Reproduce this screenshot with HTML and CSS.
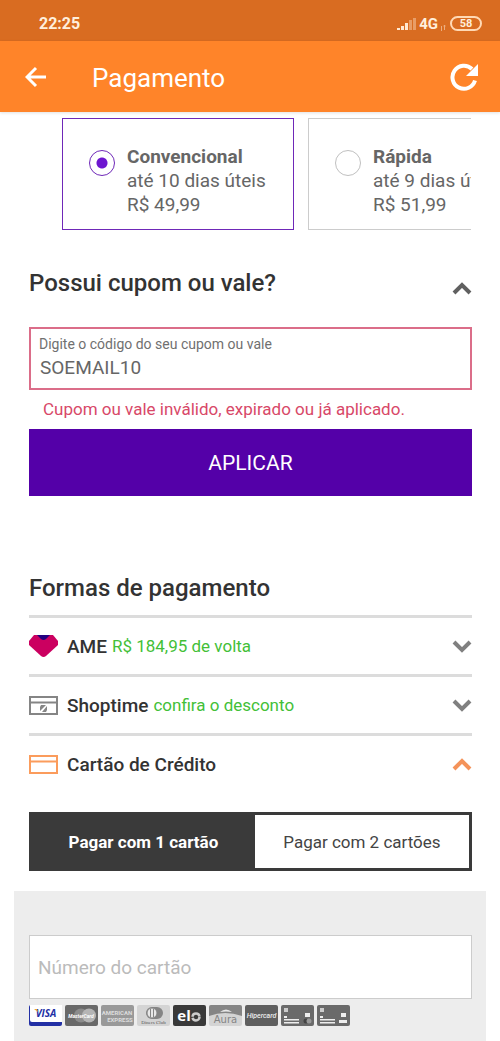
FILE: index.html
```html
<!DOCTYPE html>
<html lang="pt-BR">
<head>
<meta charset="utf-8">
<meta name="viewport" content="width=device-width, initial-scale=1">
<title>Pagamento</title>
<link rel="stylesheet" href="styles.css">
</head>
<body>
<div class="status">
  <span class="clock">22:25</span>
  <div class="status-right">
    <svg class="signal" width="20" height="14" viewBox="0 0 20 14" aria-hidden="true">
      <path d="M0 11h3v2H0zM4 9h3v4H4zM8 6h3v7H8z"/>
      <path opacity=".4" d="M12 3h3v10h-3zM16 1h3v12h-3z"/>
    </svg>
    <span class="network">4G</span>
    <svg class="traffic" width="6" height="6" viewBox="0 0 6 6" aria-hidden="true"><path d="M1.500 1v5M4.500 0v5M3.500 1h2"/></svg>
    <span class="battery">58</span>
  </div>
</div>
<header class="topbar">
  <button class="icon-button" aria-label="Voltar">
    <svg width="22" height="22" viewBox="0 0 22 22"><path class="line" d="M21 11H3M11 2l-9 9 9 9"/></svg>
  </button>
  <h1>Pagamento</h1>
  <button class="icon-button" aria-label="Atualizar">
    <svg width="30" height="30" viewBox="0 0 30 30"><path class="line thick" d="M26 18.500A11.500 11.500 0 1 1 23 7"/><path fill="#fff" d="M29 2v12H17z"/></svg>
  </button>
</header>
<main>
  <section class="shipping" aria-label="Entrega">
    <label class="option selected">
      <input type="radio" name="shipping" checked>
      <span class="option-text"><strong>Convencional</strong><span>até 10 dias úteis</span><span>R$ 49,99</span></span>
    </label>
    <label class="option">
      <input type="radio" name="shipping">
      <span class="option-text"><strong>Rápida</strong><span>até 9 dias úteis</span><span>R$ 51,99</span></span>
    </label>
  </section>

  <section class="coupon">
    <div class="coupon-head">
      <h2>Possui cupom ou vale?</h2>
      <button class="toggle" aria-label="Recolher cupom">
        <svg class="chevron dark" width="20" height="14" viewBox="0 0 20 14"><path d="M2 12l8-8 8 8"/></svg>
      </button>
    </div>
    <div class="field invalid">
      <label for="coupon">Digite o código do seu cupom ou vale</label>
      <input id="coupon" type="text" value="SOEMAIL10">
    </div>
    <p class="error">Cupom ou vale inválido, expirado ou já aplicado.</p>
    <button class="apply">APLICAR</button>
  </section>

  <section class="payment">
    <h2>Formas de pagamento</h2>
    <button class="method">
      <svg width="29" height="22" viewBox="0 0 29 22" aria-hidden="true"><path fill="#cb0060" d="M5 0h19l5 6v4L17 21q-2.500 2-5 0L0 10V6z"/><path fill="#230080" d="M8 0h13l-4 4q-2.500 2-5 0z"/></svg>
      <span class="name">AME</span><span class="promo">R$ 184,95 de volta</span>
      <svg class="chevron" width="20" height="14" viewBox="0 0 20 14" aria-hidden="true"><path d="M2 3l8 8 8-8"/></svg>
    </button>
    <button class="method">
      <svg width="29" height="19" viewBox="0 0 29 19" aria-hidden="true"><path fill="none" stroke="#858585" stroke-width="2" d="M1 1h27v17H1zM1 6.500h27"/><path fill="#858585" d="M11 15v-4l1-2h5zM13 16l5-6v4l-1 2z"/></svg>
      <span class="name">Shoptime</span><span class="promo">confira o desconto</span>
      <svg class="chevron" width="20" height="14" viewBox="0 0 20 14" aria-hidden="true"><path d="M2 3l8 8 8-8"/></svg>
    </button>
    <button class="method" aria-expanded="true">
      <svg width="29" height="19" viewBox="0 0 29 19" aria-hidden="true"><path fill="none" stroke="#fb9c5c" stroke-width="2" d="M1 1h27v17H1zM1 6.500h27"/></svg>
      <span class="name">Cartão de Crédito</span>
      <svg class="chevron orange" width="20" height="14" viewBox="0 0 20 14" aria-hidden="true"><path d="M2 12l8-8 8 8"/></svg>
    </button>
    <div class="tabs">
      <button class="tab active">Pagar com 1 cartão</button>
      <button class="tab">Pagar com 2 cartões</button>
    </div>
  </section>

  <section class="card-form">
    <input class="card-number" type="text" inputmode="numeric" aria-label="Número do cartão" placeholder="Número do cartão">
    <div class="brands">
      <svg viewBox="0 0 33 21"><rect width="33" height="21" rx="2" fill="#2330a5"/><path fill="#fff" d="M1 0h32v17H3q-2 0-2-2z"/><text class="visa" x="17" y="12">VISA</text><path fill="#f0a830" d="M5 4h3l1 3z"/></svg>
      <svg viewBox="0 0 33 21"><rect width="33" height="21" rx="2" fill="#696969"/><circle cx="16" cy="10.500" r="7" fill="#8c8c8c"/><circle cx="24" cy="10.500" r="7" fill="#b5b5b5"/><text class="master" x="16" y="13">MasterCard</text></svg>
      <svg viewBox="0 0 33 21"><rect width="33" height="21" rx="2" fill="#999"/><text class="amex" x="16" y="10">AMERICAN</text><text class="amex" x="19" y="17">EXPRESS</text></svg>
      <svg viewBox="0 0 33 21"><rect width="33" height="21" rx="2" fill="#d4d4d4"/><rect x="9" y="2" width="17" height="12" rx="6" fill="#858585"/><circle cx="15" cy="8" r="5" fill="#e8e8e8" stroke="#858585"/><path stroke="#858585" d="M13.500 4v8M16.500 4v8"/><text class="diners" x="16.500" y="19">Diners Club</text></svg>
      <svg viewBox="0 0 33 21"><rect width="33" height="21" rx="2" fill="#393939"/><text class="elo" x="11" y="16">el</text><circle cx="23" cy="12" r="3.500" fill="none" stroke="#ccc" stroke-width="2.500" stroke-dasharray="10 1"/></svg>
      <svg viewBox="0 0 33 21"><rect width="33" height="21" rx="2" fill="#d4d4d4"/><path fill="#858585" d="M2 0h29q2 0 2 2v9Q16 5 0 11V2q0-2 2-2z"/><path fill="#e8e8e8" d="M11 7q6-5 12 0-6-1-12 0z"/><text class="aura" x="16.500" y="18">Aura</text></svg>
      <svg viewBox="0 0 33 21"><rect width="33" height="21" rx="2" fill="#5f5f5f"/><text class="hiper" x="16.500" y="13">Hipercard</text></svg>
      <svg viewBox="0 0 33 21"><rect width="33" height="21" rx="2" fill="#6a6a6a"/><path fill="#ccc" d="M3 3h4v4H3z"/><path fill="#eee" d="M3 11h3v2H3zM3 14h15v1.500H3zM3 17h15v1.500H3zM24 8h5v4h-5z"/><circle cx="25" cy="16" r="2.500" fill="#444"/><circle cx="28" cy="16" r="2.500" fill="#999"/></svg>
      <svg viewBox="0 0 33 21"><rect width="33" height="21" rx="2" fill="#6a6a6a"/><path fill="#ccc" d="M3 3h4v4H3z"/><path fill="#eee" d="M3 11h3v2H3zM3 14h15v1.500H3zM3 17h15v1.500H3zM24 8h5v4h-5zM22 15h8v3h-8z"/></svg>
    </div>
  </section>
</main>
</body>
</html>
```
FILE: styles.css
```css
* { box-sizing: border-box; }
body {
  margin: 0;
  min-height: 100vh;
  display: flex;
  flex-direction: column;
  background: #fff;
  color: #333;
  font-family: Roboto, "Liberation Sans", sans-serif;
}
button, input { font-family: inherit; }
button { border: 0; padding: 0; background: none; color: inherit; cursor: pointer; }
h1, h2, p { margin: 0; }
svg { flex: none; display: block; }

.status {
  display: flex;
  align-items: center;
  justify-content: space-between;
  height: 41px;
  padding: 6px 18px 0 39px;
  background: #d96c21;
  color: #ffefdc;
  font-size: 16px;
  font-weight: 700;
}
.status-right { display: flex; align-items: center; gap: 2px; }
.signal { fill: #ffe9d2; }
.network { font-size: 15px; }
.traffic { align-self: flex-end; margin-bottom: 2px; fill: none; stroke: #ecae80; }
.battery {
  width: 32px;
  margin-left: 2px;
  border: 2px solid #ffd9b5;
  border-radius: 8px;
  font-size: 11px;
  line-height: 11px;
  text-align: center;
}

.topbar {
  display: flex;
  align-items: center;
  height: 71px;
  padding: 0 21px 0 25px;
  background: #ff8429;
  color: #fff;
  box-shadow: 0 1px 3px rgba(0, 0, 0, .12);
}
.topbar h1 { flex: 1; margin-left: 45px; padding-top: 2px; font-size: 26px; font-weight: 400; }
.line { fill: none; stroke: #fff; stroke-width: 3; }
.thick { stroke-width: 4; }

main { flex: 1; display: flex; flex-direction: column; }

.shipping {
  display: flex;
  gap: 14px;
  margin: 6px 29px 0 62px;
  overflow: hidden;
}
.option {
  flex: none;
  display: flex;
  gap: 12px;
  width: 232px;
  height: 112px;
  padding: 26px;
  border: 1px solid #ccc;
  color: #666;
  font-size: 19px;
  line-height: 24px;
}
.option.selected { border-color: #6f28b8; }
.option-text { display: flex; flex-direction: column; white-space: nowrap; }
.option strong { font-weight: 700; }
.option input {
  appearance: none;
  flex: none;
  width: 26px;
  height: 26px;
  margin: 5px 0 0;
  border: 1px solid #c0c0c0;
  border-radius: 50%;
}
.option input:checked {
  border-color: #6f28b8;
  background: radial-gradient(circle, #6d16d0 5px, transparent 6px);
}

.coupon { margin: 36px 28px 0 29px; }
.coupon-head { display: flex; justify-content: space-between; align-items: center; height: 34px; }
h2 { font-size: 24px; line-height: 34px; font-weight: 500; }
.toggle { padding-top: 10px; }
.chevron { fill: none; stroke: #808080; stroke-width: 4; }
.chevron.dark { stroke: #606060; }
.chevron.orange { stroke: #f4935a; }

.field {
  display: flex;
  flex-direction: column;
  margin-top: 27px;
  height: 63px;
  padding: 6px 8px;
  border: 2px solid #db6d89;
  color: #707070;
}
.field label { font-size: 14px; line-height: 18px; }
.field input {
  width: 100%;
  height: 30px;
  padding: 0 1px;
  border: 0;
  outline: 0;
  background: none;
  color: #666;
  font-size: 19px;
}
.error { padding: 8px 14px; color: #d84868; font-size: 17px; line-height: 22px; }
.apply {
  width: 100%;
  height: 67px;
  margin-top: 1px;
  background: #5400a8;
  color: #fff;
  font-size: 21px;
}

.payment { margin: 75px 28px 0 29px; }
.payment h2 { margin-bottom: 10px; }
.method {
  display: flex;
  align-items: center;
  width: 100%;
  height: 59px;
  border-top: 3px solid #dcdcdc;
  text-align: left;
}
.method .name { margin-left: 9px; font-size: 19px; font-weight: 500; }
.method .promo { margin-left: 5px; color: #43bf38; font-size: 17px; }
.method .chevron { margin-left: auto; }
.tabs {
  display: grid;
  grid-template-columns: 51fr 49fr;
  margin-top: 20px;
  height: 59px;
  border: 3px solid #3a3a3a;
}
.tab { font-size: 17px; color: #444; }
.tab.active { background: #3a3a3a; color: #fff; font-weight: 700; }

.card-form { flex: 1; margin: 20px 14px 0; padding: 44px 14px 15px 15px; background: #ededed; }
.card-number {
  display: block;
  width: 100%;
  height: 64px;
  padding: 0 8px;
  border: 1px solid #ccc;
  border-radius: 0;
  background: #fff;
  color: #444;
  font-size: 19px;
}
.card-number::placeholder { color: #bbb; opacity: 1; }
.brands { display: flex; gap: 3px; margin-top: 6px; }
.brands svg { width: 33px; height: 21px; }
.brands text { text-anchor: middle; fill: #eee; }
.brands .visa { fill: #2330a5; font-family: "Open Sans", sans-serif; font-size: 10px; font-weight: 700; font-style: italic; }
.brands .master { font-size: 5px; font-weight: 700; font-style: italic; fill: #fff; }
.brands .amex { font-size: 6px; font-weight: 700; fill: #ddd; }
.brands .diners { font-family: "Liberation Serif", serif; font-size: 5px; fill: #555; }
.brands .elo { font-family: "Open Sans", sans-serif; font-size: 15px; font-weight: 700; fill: #fff; }
.brands .aura { font-family: "DejaVu Sans", sans-serif; font-size: 10px; fill: #858585; }
.brands .hiper { font-size: 7px; font-weight: 500; font-style: italic; }
```
